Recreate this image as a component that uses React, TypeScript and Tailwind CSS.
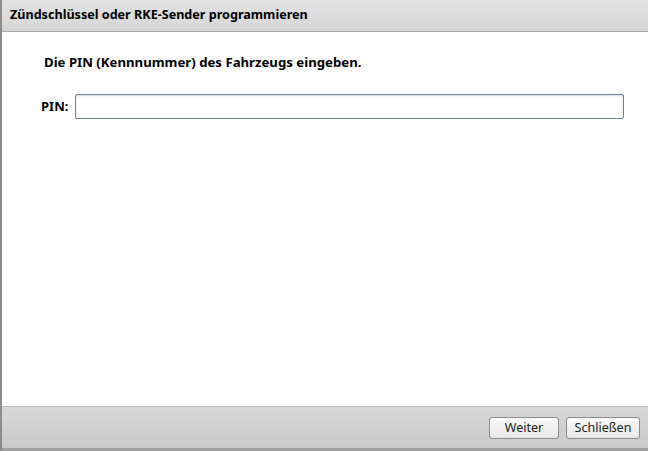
export default function App() {
  return (
    <div
      className="w-[648px] h-[451px] flex flex-col bg-white border-l-2 border-[#8c8c8c] overflow-hidden"
      style={{ fontFamily: '"Noto Sans", "DejaVu Sans", sans-serif' }}
    >
      <div className="h-[32px] shrink-0 flex items-center pl-[8px] bg-gradient-to-b from-[#e2e2e2] to-[#d6d6d6] border-b border-[#a8a8a8]">
        <span className="text-[12.6px] font-bold text-black">
          Zündschlüssel oder RKE-Sender programmieren
        </span>
      </div>
      <div className="flex-1 flex flex-col">
        <div className="pl-[42px] pt-[21px] text-[13.2px] font-bold text-black leading-[18px]">
          Die PIN (Kennnummer) des Fahrzeugs eingeben.
        </div>
        <div className="flex items-center pl-[39px] pt-[23px]">
          <span className="text-[13px] font-bold text-black w-[34px]">PIN:</span>
          <input
            className="w-[549px] h-[25px] border border-[#6a7d9c] rounded-[2px] shadow-[inset_0_1px_2px_rgba(0,0,0,0.15)] outline-none px-1 text-[12px]"
            type="text"
          />
        </div>
      </div>
      <div className="h-[45px] shrink-0 flex items-start justify-end gap-[7px] pr-[8px] pt-[10px] bg-gradient-to-b from-[#d9d9d9] to-[#c9c9c9] border-t border-[#b5b5b5] border-b-[3px] border-b-[#a0a0a0]">
        <button className="w-[70px] h-[22px] rounded-[3px] border border-[#8a8a8a] bg-gradient-to-b from-[#fafafa] to-[#e6e6e6] text-[12.5px] text-[#222] leading-none">
          Weiter
        </button>
        <button className="w-[74px] h-[22px] rounded-[3px] border border-[#8a8a8a] bg-gradient-to-b from-[#fafafa] to-[#e6e6e6] text-[12.5px] text-[#222] leading-none">
          Schließen
        </button>
      </div>
    </div>
  );
}
